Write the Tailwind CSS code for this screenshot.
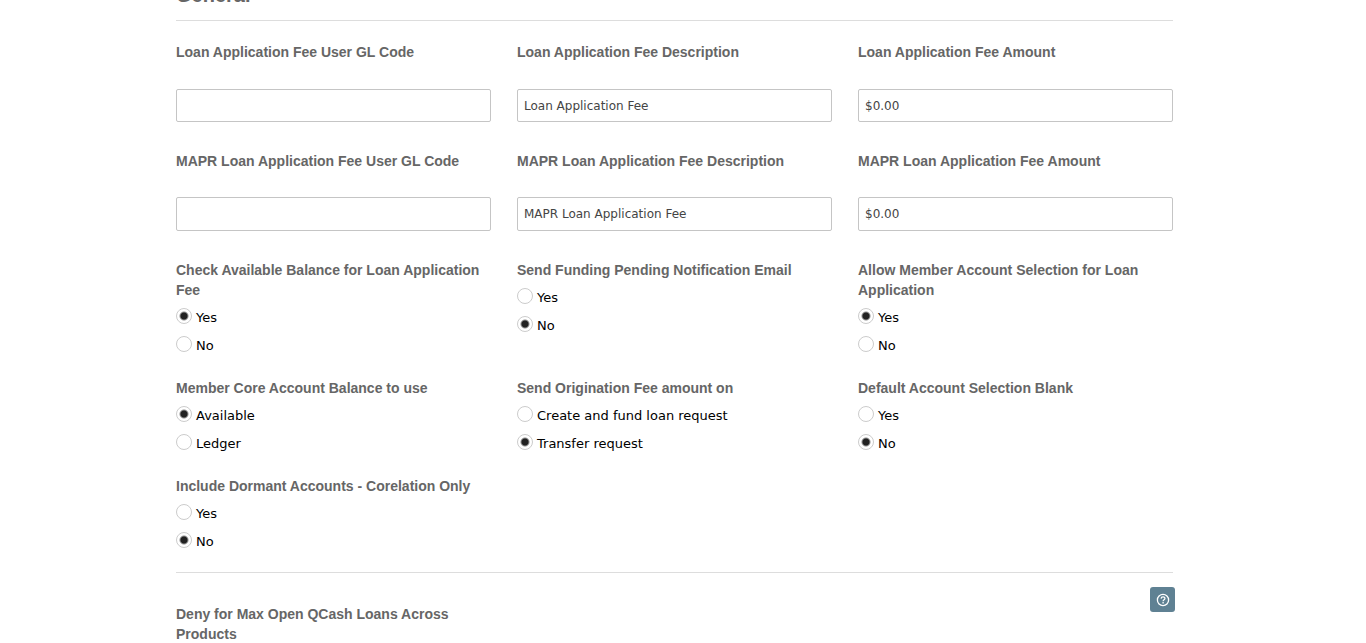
<!DOCTYPE html>
<html lang="en">
<head>
<meta charset="utf-8">
<meta name="viewport" content="width=device-width, initial-scale=1">
<title>General settings</title>
<script src="https://cdn.jsdelivr.net/npm/@tailwindcss/browser@4"></script>
</head>
<body class="bg-white pr-[17px] font-['DejaVu_Sans',sans-serif] text-[13px] text-black">
<main class="mx-auto max-w-[997px]">
  <h1 class="-mt-[17px] h-[37px] font-['Liberation_Sans',sans-serif] text-xl leading-6 font-bold text-[#666]">General</h1>
  <form class="border-y border-[#ddd] pt-[21px] pb-4">
    <div class="grid grid-cols-3 gap-x-[26px] font-['Liberation_Sans',sans-serif]">
      <div class="flex h-[109px] flex-col gap-[27px]">
        <label for="gl" class="text-sm leading-5 font-bold text-[#666]">Loan Application Fee User GL Code</label>
        <input id="gl" type="text" class="h-[33px] w-full rounded-xs border border-[#c5c5c5] px-1.5 font-['DejaVu_Sans',sans-serif] text-xs text-[#444]">
      </div>
      <div class="flex h-[109px] flex-col gap-[27px]">
        <label for="desc" class="text-sm leading-5 font-bold text-[#666]">Loan Application Fee Description</label>
        <input id="desc" type="text" value="Loan Application Fee" class="h-[33px] w-full rounded-xs border border-[#c5c5c5] px-1.5 font-['DejaVu_Sans',sans-serif] text-xs text-[#444]">
      </div>
      <div class="flex h-[109px] flex-col gap-[27px]">
        <label for="amt" class="text-sm leading-5 font-bold text-[#666]">Loan Application Fee Amount</label>
        <input id="amt" type="text" value="$0.00" class="h-[33px] w-full rounded-xs border border-[#c5c5c5] px-1.5 font-['DejaVu_Sans',sans-serif] text-xs text-[#444]">
      </div>
      <div class="flex h-[109px] flex-col gap-[26px]">
        <label for="mgl" class="text-sm leading-5 font-bold text-[#666]">MAPR Loan Application Fee User GL Code</label>
        <input id="mgl" type="text" class="h-[34px] w-full rounded-xs border border-[#c5c5c5] px-1.5 font-['DejaVu_Sans',sans-serif] text-xs text-[#444]">
      </div>
      <div class="flex h-[109px] flex-col gap-[26px]">
        <label for="mdesc" class="text-sm leading-5 font-bold text-[#666]">MAPR Loan Application Fee Description</label>
        <input id="mdesc" type="text" value="MAPR Loan Application Fee" class="h-[34px] w-full rounded-xs border border-[#c5c5c5] px-1.5 font-['DejaVu_Sans',sans-serif] text-xs text-[#444]">
      </div>
      <div class="flex h-[109px] flex-col gap-[26px]">
        <label for="mamt" class="text-sm leading-5 font-bold text-[#666]">MAPR Loan Application Fee Amount</label>
        <input id="mamt" type="text" value="$0.00" class="h-[34px] w-full rounded-xs border border-[#c5c5c5] px-1.5 font-['DejaVu_Sans',sans-serif] text-xs text-[#444]">
      </div>
    </div>
    <div class="grid grid-cols-3 gap-x-[26px] gap-y-[18px]">
      <fieldset>
        <legend class="font-['Liberation_Sans',sans-serif] text-sm leading-5 font-bold text-[#666]">Check Available Balance for Loan Application<br>Fee</legend>
        <label class="mt-1 flex h-7 items-center gap-1"><input type="radio" name="bal" checked class="mb-1 size-4 appearance-none rounded-full border border-[#ccc] bg-white checked:bg-[radial-gradient(circle,#222_3px,#fff_5px)]">Yes</label>
        <label class="flex h-7 items-center gap-1"><input type="radio" name="bal" class="mb-1 size-4 appearance-none rounded-full border border-[#ccc] bg-white checked:bg-[radial-gradient(circle,#222_3px,#fff_5px)]">No</label>
      </fieldset>
      <fieldset>
        <legend class="font-['Liberation_Sans',sans-serif] text-sm leading-5 font-bold text-[#666]">Send Funding Pending Notification Email</legend>
        <label class="mt-1 flex h-7 items-center gap-1"><input type="radio" name="email" class="mb-1 size-4 appearance-none rounded-full border border-[#ccc] bg-white checked:bg-[radial-gradient(circle,#222_3px,#fff_5px)]">Yes</label>
        <label class="flex h-7 items-center gap-1"><input type="radio" name="email" checked class="mb-1 size-4 appearance-none rounded-full border border-[#ccc] bg-white checked:bg-[radial-gradient(circle,#222_3px,#fff_5px)]">No</label>
      </fieldset>
      <fieldset>
        <legend class="font-['Liberation_Sans',sans-serif] text-sm leading-5 font-bold text-[#666]">Allow Member Account Selection for Loan<br>Application</legend>
        <label class="mt-1 flex h-7 items-center gap-1"><input type="radio" name="select" checked class="mb-1 size-4 appearance-none rounded-full border border-[#ccc] bg-white checked:bg-[radial-gradient(circle,#222_3px,#fff_5px)]">Yes</label>
        <label class="flex h-7 items-center gap-1"><input type="radio" name="select" class="mb-1 size-4 appearance-none rounded-full border border-[#ccc] bg-white checked:bg-[radial-gradient(circle,#222_3px,#fff_5px)]">No</label>
      </fieldset>
      <fieldset>
        <legend class="font-['Liberation_Sans',sans-serif] text-sm leading-5 font-bold text-[#666]">Member Core Account Balance to use</legend>
        <label class="mt-1 flex h-7 items-center gap-1"><input type="radio" name="core" checked class="mb-1 size-4 appearance-none rounded-full border border-[#ccc] bg-white checked:bg-[radial-gradient(circle,#222_3px,#fff_5px)]">Available</label>
        <label class="flex h-7 items-center gap-1"><input type="radio" name="core" class="mb-1 size-4 appearance-none rounded-full border border-[#ccc] bg-white checked:bg-[radial-gradient(circle,#222_3px,#fff_5px)]">Ledger</label>
      </fieldset>
      <fieldset>
        <legend class="font-['Liberation_Sans',sans-serif] text-sm leading-5 font-bold text-[#666]">Send Origination Fee amount on</legend>
        <label class="mt-1 flex h-7 items-center gap-1"><input type="radio" name="orig" class="mb-1 size-4 appearance-none rounded-full border border-[#ccc] bg-white checked:bg-[radial-gradient(circle,#222_3px,#fff_5px)]">Create and fund loan request</label>
        <label class="flex h-7 items-center gap-1"><input type="radio" name="orig" checked class="mb-1 size-4 appearance-none rounded-full border border-[#ccc] bg-white checked:bg-[radial-gradient(circle,#222_3px,#fff_5px)]">Transfer request</label>
      </fieldset>
      <fieldset>
        <legend class="font-['Liberation_Sans',sans-serif] text-sm leading-5 font-bold text-[#666]">Default Account Selection Blank</legend>
        <label class="mt-1 flex h-7 items-center gap-1"><input type="radio" name="blank" class="mb-1 size-4 appearance-none rounded-full border border-[#ccc] bg-white checked:bg-[radial-gradient(circle,#222_3px,#fff_5px)]">Yes</label>
        <label class="flex h-7 items-center gap-1"><input type="radio" name="blank" checked class="mb-1 size-4 appearance-none rounded-full border border-[#ccc] bg-white checked:bg-[radial-gradient(circle,#222_3px,#fff_5px)]">No</label>
      </fieldset>
      <fieldset>
        <legend class="font-['Liberation_Sans',sans-serif] text-sm leading-5 font-bold text-[#666]">Include Dormant Accounts - Corelation Only</legend>
        <label class="mt-1 flex h-7 items-center gap-1"><input type="radio" name="dormant" class="mb-1 size-4 appearance-none rounded-full border border-[#ccc] bg-white checked:bg-[radial-gradient(circle,#222_3px,#fff_5px)]">Yes</label>
        <label class="flex h-7 items-center gap-1"><input type="radio" name="dormant" checked class="mb-1 size-4 appearance-none rounded-full border border-[#ccc] bg-white checked:bg-[radial-gradient(circle,#222_3px,#fff_5px)]">No</label>
      </fieldset>
    </div>
  </form>
  <section class="-mr-0.5 flex items-start justify-between pt-3.5">
    <h2 class="pt-[17px] font-['Liberation_Sans',sans-serif] text-sm leading-5 font-bold text-[#666]">Deny for Max Open QCash Loans Across<br>Products</h2>
    <button type="button" aria-label="Help" class="flex size-[25px] items-center justify-center rounded-[3px] bg-[#5f8193]">
      <svg class="size-3.5" viewBox="0 0 14 14" fill="none" stroke="#fff" stroke-width="1.3"><circle cx="7" cy="7" r="5.6"/><path d="M5.1 5.6c.1-2.4 3.9-2.3 3.8-.1C8.8 6.900 7.100 6.700 7.100 8.200M7.100 9.100v1.400"/></svg>
    </button>
  </section>
</main>
</body>
</html>
